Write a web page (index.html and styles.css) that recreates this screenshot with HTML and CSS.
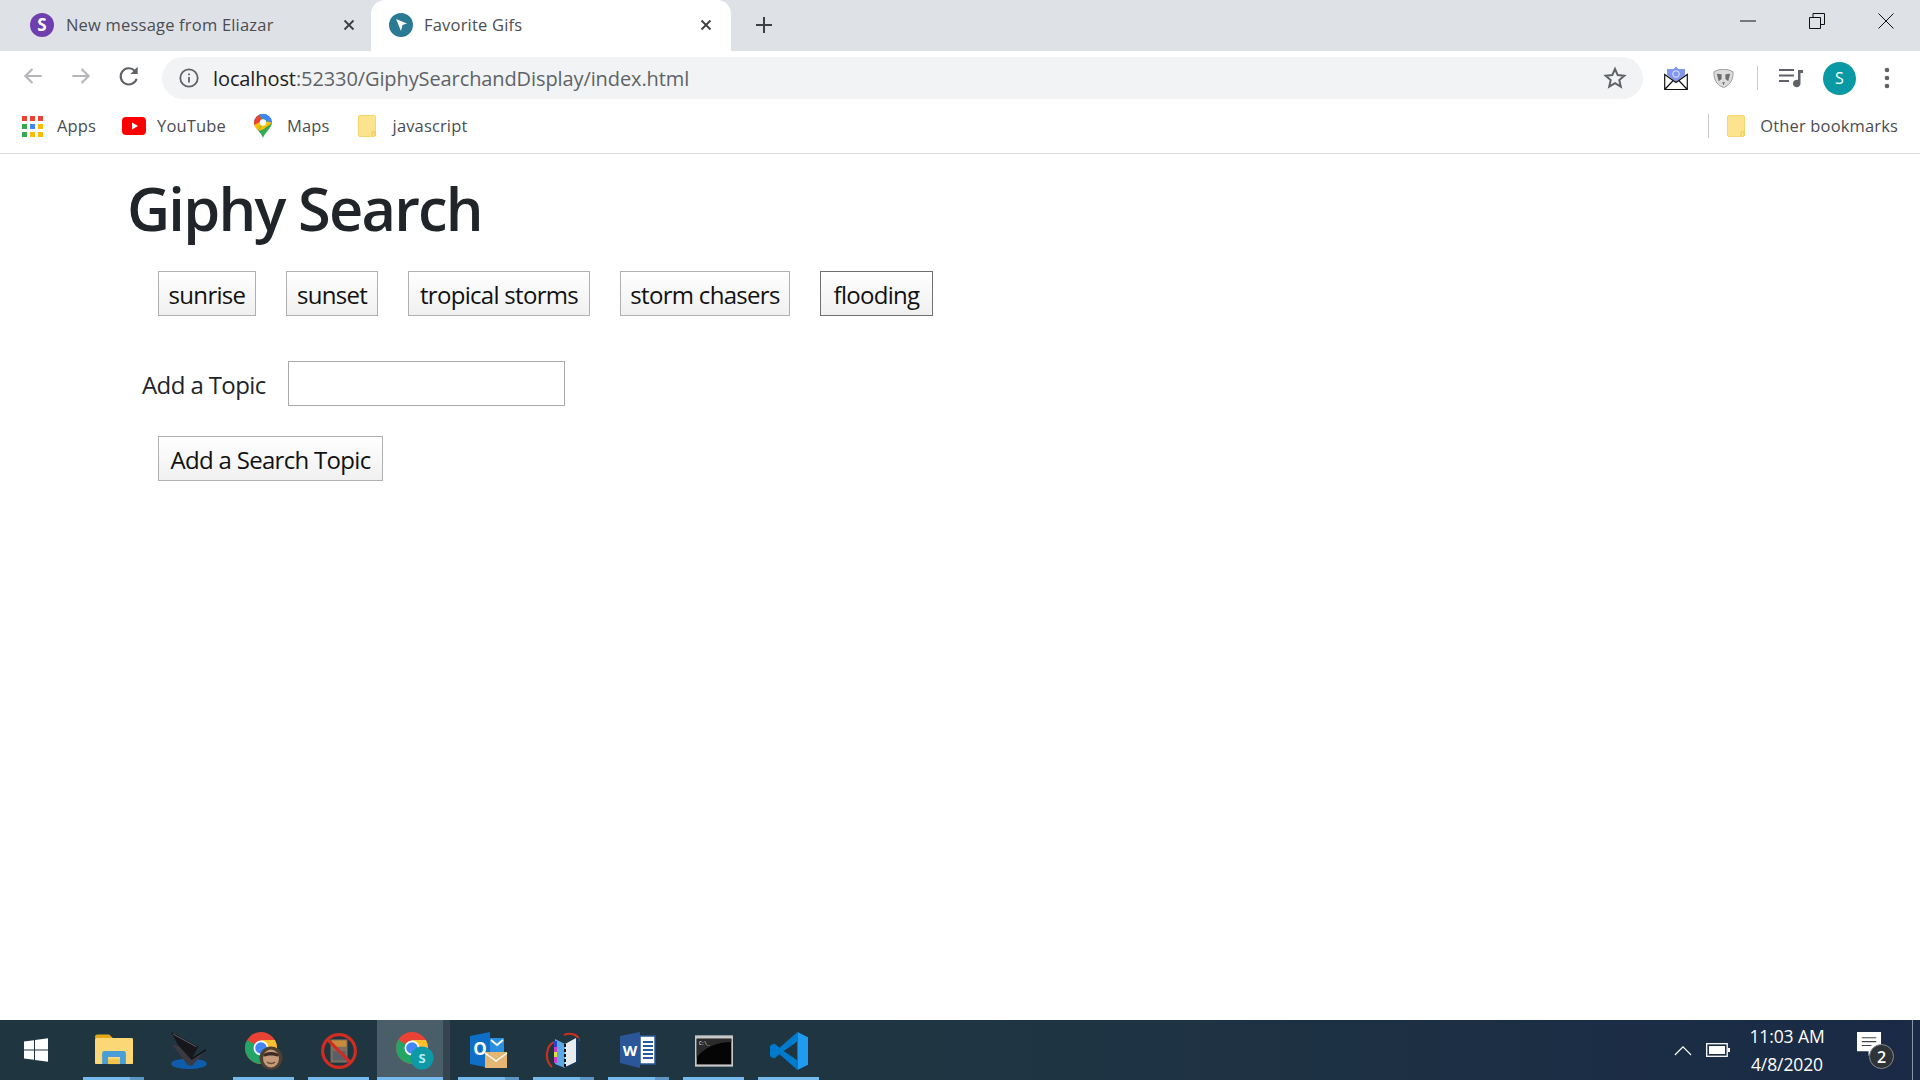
FILE: index.html
```html
<!DOCTYPE html>
<html lang="en">
<head>
<meta charset="utf-8">
<title>Favorite Gifs</title>
<link rel="stylesheet" href="styles.css">
</head>
<body>
<svg class="sprite" viewBox="0 0 38 38" aria-hidden="true"><defs>
  <g id="chromeIcon"><circle cx="16" cy="16" r="16" fill="#ea4335"/><path d="M16 16L2.200 8A16 16 0 0 0 16 32l8-3z" fill="#22a565"/><path d="M16 16h16a16 16 0 0 1-8 13.900z" fill="#fbc02d"/><path d="M16 8h13.900A16 16 0 0 1 32 16v8H20z" fill="#fbc02d"/><circle cx="16" cy="16" r="7.500" fill="#fff"/><circle cx="16" cy="16" r="5.800" fill="#4285f4"/></g>
  <g id="fold"><rect x=".5" y=".5" width="17" height="21" rx="1.500" fill="#fee38f" stroke="#f6d56c"/><path d="M14 21v-3a1.500 1.500 0 0 1 3 0v3" fill="none" stroke="#eec84f"/></g>
  <clipPath id="pin"><path d="M9 24C7.500 18.500 0 14 0 8.500a9 8.500 0 0 1 18 0C18 14 10.500 18.500 9 24z"/></clipPath>
</defs></svg>
<div class="chrome">
  <div class="titlebar">
    <div class="tab">
      <svg class="favicon" viewBox="0 0 24 24"><circle cx="12" cy="12" r="12" fill="#6f3fb0"/><text x="12" y="17.500" text-anchor="middle" class="fav-s">S</text></svg>
      <span class="tab-title">New message from Eliazar</span>
      <svg class="tab-x" viewBox="0 0 12 12"><path d="M1.500 1.500l9 9M10.500 1.500l-9 9"/></svg>
    </div>
    <div class="tab tab-active">
      <svg class="favicon" viewBox="0 0 24 24"><circle cx="12" cy="12" r="12" fill="#2a7a94"/><path d="M7 6l11 4.500-4.500 1.600L12 18z" fill="#fff"/></svg>
      <span class="tab-title">Favorite Gifs</span>
      <svg class="tab-x" viewBox="0 0 12 12"><path d="M1.500 1.500l9 9M10.500 1.500l-9 9"/></svg>
    </div>
    <svg class="newtab" viewBox="0 0 18 18"><path d="M9 1v16M1 9h16"/></svg>
    <div class="winctl">
      <svg viewBox="0 0 16 16"><path d="M0 8h16"/></svg>
      <svg viewBox="0 0 16 16"><path d="M.5 4.500h11v11H.5zM4 4.500V.5h11.500v11H11.500"/></svg>
      <svg viewBox="0 0 16 16"><path d="M.5.500l15 15M15.500.500l-15 15"/></svg>
    </div>
  </div>
  <div class="toolbar">
    <svg class="nav nav-dim" viewBox="0 0 24 24"><path d="M20 12H5M11.500 5.500L5 12l6.500 6.500"/></svg>
    <svg class="nav nav-dim" viewBox="0 0 24 24"><path d="M4 12h15M12.500 5.500L19 12l-6.500 6.500"/></svg>
    <svg class="nav nav-reload" viewBox="0 0 24 24"><path d="M19 14.500a7.500 7.500 0 1 1-1.800-7.400"/><path class="fillp" d="M20 3.500v6.700h-6.700z"/></svg>
    <div class="omnibox">
      <svg class="info" viewBox="0 0 20 20"><circle cx="10" cy="10" r="8.700"/><path d="M10 9v5.500M10 5.400v1.800"/></svg>
      <span class="url"><span class="url-host">localhost</span>:52330/GiphySearchandDisplay/index.html</span>
      <svg class="star" viewBox="0 0 24 24"><path d="M12 3l2.700 6.100 6.600.6-5 4.400 1.500 6.500L12 17.200l-5.800 3.400 1.500-6.500-5-4.400 6.600-.6z"/></svg>
    </div>
    <svg class="ext ext-mail" viewBox="0 0 24 24"><path d="M12 .5l2.500 2.500H21v6l-9 7-9-7V3h6.500z" fill="#8296ee"/><circle cx="12" cy="8" r="3.300" fill="none" stroke="#dfe6ff" stroke-width="1"/><path d="M.7 8.500l11.300 8 11.300-8v15H.7zM.7 23.500l8.500-9M23.300 23.500l-8.500-9" fill="none" stroke="#111" stroke-width="1.200"/></svg>
    <svg class="ext ext-shield" viewBox="0 0 22 20"><path d="M1 3c5-3.500 15-3.500 20 0 .5 7-2 13.500-10 16.500C3 16.500.5 10 1 3z" fill="#dcdcdc"/><path d="M4 5l5 .5v5L6 13zM18 5l-5 .5v5l3 2.500zM9.500 14h3l-1.500 3z" fill="#6d6d6d"/><path d="M1 3c5-3.500 15-3.500 20 0 .5 7-2 13.500-10 16.500C3 16.500.5 10 1 3z" fill="none" stroke="#999"/></svg>
    <span class="tool-sep"></span>
    <svg class="ext ext-music" viewBox="0 0 24 20"><path d="M0 2h15M0 7.500h15M0 13h10" stroke="#5f6368" stroke-width="2" fill="none"/><path d="M19 2h5v3h-2.500v10.500a3.800 3.800 0 1 1-2.500-3.500z" fill="#5f6368"/></svg>
    <div class="avatar">S</div>
    <svg class="kebab" viewBox="0 0 6 24"><circle cx="3" cy="4" r="2.300"/><circle cx="3" cy="12" r="2.300"/><circle cx="3" cy="20" r="2.300"/></svg>
  </div>
  <div class="bookmarks">
    <div class="bm bm-apps">
      <svg class="bm-icon" viewBox="0 0 21 21">
        <rect x="0" y="0" width="5" height="5" fill="#ea4335"/><rect x="8" y="0" width="5" height="5" fill="#ea4335"/><rect x="16" y="0" width="5" height="5" fill="#ea4335"/>
        <rect x="0" y="8" width="5" height="5" fill="#34a853"/><rect x="8" y="8" width="5" height="5" fill="#4285f4"/><rect x="16" y="8" width="5" height="5" fill="#fbbc05"/>
        <rect x="0" y="16" width="5" height="5" fill="#34a853"/><rect x="8" y="16" width="5" height="5" fill="#fbbc05"/><rect x="16" y="16" width="5" height="5" fill="#fbbc05"/>
      </svg>
      <span>Apps</span>
    </div>
    <div class="bm bm-yt">
      <svg class="bm-icon" viewBox="0 0 24 18"><rect width="24" height="18" rx="4" fill="#f00"/><path d="M10 5.500l6 3.500-6 3.500z" fill="#fff"/></svg>
      <span>YouTube</span>
    </div>
    <div class="bm bm-maps">
      <svg class="bm-icon" viewBox="0 0 18 24"><g clip-path="url(#pin)"><rect width="18" height="24" fill="#34a853"/><path d="M0 8h9l-5 8.500L0 14z" fill="#fbbc05"/><path d="M9 9l9-3v3l-9 6.500-5 1.500z" fill="#fbbc05"/><path d="M0 0h5l3 7-8 4z" fill="#ea4335"/><path d="M3 0h15v9L12 6.500z" fill="#4285f4"/></g><circle cx="9" cy="8.500" r="3.200" fill="#fff"/></svg>
      <span>Maps</span>
    </div>
    <div class="bm bm-folder">
      <svg class="bm-icon" viewBox="0 0 18 22"><use href="#fold"/></svg>
      <span>javascript</span>
    </div>
    <div class="bm-right bm-folder">
      <span class="bm-sep"></span>
      <svg class="bm-icon" viewBox="0 0 18 22"><use href="#fold"/></svg>
      <span>Other bookmarks</span>
    </div>
  </div>
</div>

<main class="page">
  <h1 class="heading">Giphy Search</h1>
  <div class="topic-row">
    <button class="btn">sunrise</button>
    <button class="btn">sunset</button>
    <button class="btn">tropical storms</button>
    <button class="btn">storm chasers</button>
    <button class="btn btn-hover">flooding</button>
  </div>
  <form class="topic-form">
    <div class="field">
      <label class="field-label" for="topic">Add a Topic</label>
      <input class="field-input" id="topic" type="text">
    </div>
    <button class="btn btn-add" type="button">Add a Search Topic</button>
  </form>
</main>

<footer class="taskbar">
  <svg class="start" viewBox="0 0 24 24"><path d="M0 3.600l10-1.400v9.300H0zM11 2.100L24 .2v11.300H11zM0 12.500h10v9.300L0 20.400zM11 12.500h13v11.300l-13-1.900z" fill="#fff"/></svg>
  <div class="tb-item tb-split">
    <svg viewBox="0 0 32 28"><path d="M0 2a2 2 0 0 1 2-2h10l3 3H0z" fill="#e6a817"/><rect y="3" width="32" height="22" rx="1" fill="#fbd775"/><path d="M6 25v-9a2 2 0 0 1 2-2h16a2 2 0 0 1 2 2v9h-5v-6H11v6z" fill="#4a9ed8"/><rect x="11" y="21" width="10" height="4" fill="#f0c34a"/></svg>
  </div>
  <div class="tb-item tb-none">
    <svg viewBox="0 0 36 36"><ellipse cx="18" cy="30" rx="17" ry="5" fill="#0f5cab"/><path d="M1 0l26 14-7 12L8 13z" fill="#17171b"/><path d="M3 2l22 12" stroke="#6a6a72" stroke-width=".8"/><path d="M2 12l6 1 12 13 14-9-13 15-4-.5z" fill="#3a3a40"/><path d="M20 26l14-9" stroke="#111" stroke-width="1.500"/></svg>
  </div>
  <div class="tb-item">
    <svg viewBox="0 0 38 38"><use href="#chromeIcon"/><circle cx="26" cy="26" r="11.500" fill="#4f4033"/><ellipse cx="26" cy="26.500" rx="8" ry="9" fill="#c49a78"/><path d="M18 23c3-4 13-4 16 0l-1.500 1.500c-3-1.500-10-1.500-13 0z" fill="#3a2c24"/><path d="M22 30c2 2 6 2 8 0" stroke="#6e4a3a" stroke-width="1.500" fill="none"/></svg>
  </div>
  <div class="tb-item tb-tight">
    <svg viewBox="0 0 36 36"><rect x="10" y="7" width="16" height="22" fill="#7d6f5e"/><rect x="11" y="8" width="14" height="6" fill="#c98a3a"/><path d="M12 18h12v9H12z" fill="#59606a"/><circle cx="18" cy="18" r="15.500" fill="none" stroke="#cf2c22" stroke-width="3"/><path d="M7 7l22 22" stroke="#cf2c22" stroke-width="3"/></svg>
  </div>
  <div class="tb-item tb-active">
    <svg viewBox="0 0 38 38"><use href="#chromeIcon"/><circle cx="26" cy="26" r="11.500" fill="#0e99a6"/><text x="26" y="31" text-anchor="middle" class="tb-s">S</text></svg>
  </div>
  <span class="tb-gap"></span>
  <div class="tb-item tb-split">
    <svg viewBox="0 0 38 38"><path d="M20 0L0 4v28l20 4z" fill="#0f6fc6"/><rect x="20" y="6" width="14" height="14" fill="#2b8fe0"/><path d="M21 8l6 5 6-5" stroke="#fff" stroke-width="1.800" fill="none"/><text x="10" y="23" text-anchor="middle" class="tb-o">O</text><rect x="15" y="20" width="22" height="16" fill="#e5b672"/><path d="M15 21l11 8 11-8" stroke="#fff" stroke-width="1.500" fill="none"/></svg>
  </div>
  <div class="tb-item tb-split">
    <svg viewBox="0 0 38 38"><path d="M7 35C-1 28 1 14 9 10M19 3c7-3 15 0 15 6" stroke="#c4321f" stroke-width="2.200" fill="none"/><path d="M10 7l10 5v24l-10-4z" fill="#5aa9e6"/><path d="M20 12l11-6v24l-11 6z" fill="#e6ecf0"/><path d="M31 6h3v24l-14 7v-2l11-5z" fill="#1b3a5a"/><path d="M9 9h3v6H9z" fill="#2a46d0"/><path d="M9 15h3v5H9z" fill="#d23bc8"/><path d="M9 20h3v5H9z" fill="#dfe03c"/><path d="M9 25h3v6H9z" fill="#d23bc8"/><path d="M20 12v24" stroke="#111" stroke-width="2" stroke-dasharray="3 2"/></svg>
  </div>
  <div class="tb-item tb-split">
    <svg viewBox="0 0 38 38"><path d="M20 0L0 4v27l20 5z" fill="#2b579a"/><rect x="20" y="4" width="15" height="28" fill="#fff" stroke="#2b579a" stroke-width="1.500"/><path d="M23 10h10M23 14h10M23 18h10M23 22h10M23 26h10" stroke="#2b579a" stroke-width="1.800"/><text x="10" y="24" text-anchor="middle" class="tb-w">W</text></svg>
  </div>
  <div class="tb-item">
    <svg viewBox="0 0 34 28"><rect width="34" height="28" fill="#c8c8c8"/><rect x="1.500" y="3" width="31" height="23" fill="#050505"/><path d="M1.500 3h31v3C20 6 8 11 1.500 20z" fill="#2b2b2b"/><text x="3.500" y="9" class="tb-c">C:\_</text></svg>
  </div>
  <div class="tb-item">
    <svg viewBox="0 0 36 36"><path d="M26 0l10 5v26l-10 5z" fill="#1f9cf0"/><path d="M26 0v9L13 18 26 27v9L9 21l-5 4-4-2v-10l4-2 5 4z" fill="#007acc"/></svg>
  </div>
  <div class="tray">
    <svg class="tray-up" viewBox="0 0 20 12"><path d="M1 11l9-9 9 9"/></svg>
    <svg class="tray-bat" viewBox="0 0 24 14"><rect x=".7" y=".7" width="20.500" height="12.600" fill="none" stroke="#fff" stroke-width="1.300"/><rect x="3" y="3" width="16" height="8" fill="#fff"/><rect x="22" y="5" width="2" height="4" fill="#fff"/></svg>
    <div class="clock"><span>11:03 AM</span><span>4/8/2020</span></div>
    <div class="notif">
      <svg viewBox="0 0 26 26"><path d="M0 0h25v20h-9l-4 5v-5H0z" fill="#fff"/><path d="M5 6h15M5 10h15M5 14h10" stroke="#444" stroke-width="1.200"/></svg>
      <span class="notif-badge">2</span>
    </div>
  </div>
  <span class="show-desktop"></span>
</footer>
</body>
</html>
```
FILE: styles.css
```css
* { box-sizing: border-box; }
html, body { height: 100%; }
body {
  margin: 0;
  height: 1080px;
  overflow: hidden;
  display: flex;
  flex-direction: column;
  background: #fff;
  font-family: "Open Sans", "Noto Sans", sans-serif;
  color: #212529;
}
.sprite { width: 0; height: 0; position: absolute; }

/* browser chrome */
.chrome { height: 154px; border-bottom: 1px solid #dcdcdc; flex: none; }
.titlebar { height: 51px; background: #dee1e6; display: flex; align-items: center; }
.tab {
  width: 371px; height: 51px; padding: 0 16px 0 30px;
  display: flex; align-items: center; color: #4a4d52;
  font-size: 16.500px; letter-spacing: .2px;
}
.tab-active {
  width: 360px; background: #fff; border-radius: 14px 14px 0 0; padding-left: 18px; padding-right: 19px;
}
.favicon { width: 24px; height: 24px; flex: none; margin-top: -2px; }
.fav-s { font: 700 17px "Open Sans", sans-serif; fill: #fff; }
.tab-title { flex: 1; margin-left: 12px; white-space: nowrap; margin-top: -3px; }
.tab-active .tab-title { margin-left: 11px; }
.tab-x { width: 12px; height: 12px; fill: none; stroke: #3c4043; stroke-width: 1.800; flex: none; margin-top: -1px; }
.newtab { width: 18px; height: 18px; margin-left: 24px; fill: none; stroke: #3c4043; stroke-width: 2; margin-top: -1px; }
.winctl { margin-left: auto; display: flex; gap: 53px; padding-right: 26px; margin-top: -9px; }
.winctl svg { width: 16px; height: 16px; fill: none; stroke: #111; stroke-width: 1; }

.toolbar { height: 48px; display: flex; align-items: center; padding: 0 25px 0 20px; }
.nav { width: 26px; height: 26px; fill: none; stroke-width: 2; flex: none; margin-right: 22px; margin-top: 1px; }
.nav-dim { stroke: #b4b6b9; }
.nav-reload { stroke: #5f6368; margin-right: 20px; }
.fillp { fill: #5f6368; stroke: none; }
.omnibox {
  width: 1481px; height: 42px; border-radius: 21px; background: #f1f3f4;
  display: flex; align-items: center; padding: 0 16px 0 17px; margin-top: 6px; flex: none;
}
.info { width: 20px; height: 20px; fill: none; stroke: #5f6368; stroke-width: 1.800; flex: none; }
.url { flex: 1; margin-left: 14px; font-size: 20px; color: #5f6368; letter-spacing: -.1px; white-space: nowrap; }
.url-host { color: #202124; }
.star { width: 24px; height: 24px; fill: none; stroke: #5f6368; stroke-width: 2; flex: none; }
.ext { flex: none; margin-top: 6px; }
.ext-mail { width: 24px; height: 24px; margin-left: 21px; }
.ext-shield { width: 21px; height: 19px; margin-left: 25px; }
.tool-sep { width: 1px; height: 24px; background: #ccc; margin: 6px 0 0 23px; flex: none; }
.ext-music { width: 24px; height: 20px; margin-left: 21px; }
.avatar {
  width: 33px; height: 33px; border-radius: 50%; background: #0a9aa5; color: #fff; margin: 6px 0 0 20px;
  display: flex; align-items: center; justify-content: center; font-size: 16px; flex: none;
}
.kebab { width: 6px; height: 24px; fill: #5f6368; margin: 6px 0 0 28px; flex: none; }

.bookmarks { height: 54px; display: flex; align-items: center; font-size: 16.500px; letter-spacing: .15px; color: #4a4d52; padding: 0 22px; }
.bookmarks span:not(.bm-sep) { margin-top: -2px; }
.bm { display: flex; align-items: center; margin-right: 28px; }
.bm-icon { flex: none; }
.bm-apps { margin-right: 26px; }
.bm-apps .bm-icon { width: 21px; height: 21px; margin-right: 14px; }
.bm-yt .bm-icon { width: 24px; height: 18px; margin-right: 11px; }
.bm-maps .bm-icon { width: 18px; height: 24px; margin-right: 15px; }
.bm-folder .bm-icon { width: 18px; height: 22px; margin-right: 17px; }
.bm-right { margin-left: auto; display: flex; align-items: center; }
.bm-right .bm-icon { margin-right: 15px; }
.bm-sep { width: 1px; height: 24px; background: #ccc; margin-right: 18px; }

/* page */
.page { flex: 1; padding: 0 0 0 128px; }
.heading { margin: 18px 0 0 -1px; font-size: 59.500px; line-height: 72px; font-weight: 600; letter-spacing: -1.800px; }
.topic-row { display: grid; grid-template-columns: 98px 92px 182px 170px 113px; gap: 30px; margin: 27px 0 0 30px; }
.btn {
  height: 45px; padding: 2px 0 0; font: 24px "Open Sans", sans-serif; letter-spacing: -.7px; color: #111;
  border: 1px solid #b0b0b0; border-radius: 0;
  background: linear-gradient(#fff, #f0f0f0); white-space: nowrap;
}
.btn-hover { border-color: #707070; }
.btn-add { display: block; width: 225px; margin: 30px 0 0 16px; }
.topic-form { margin: 45px 0 0 14px; }
.field { display: flex; align-items: center; }
.field-label { font-size: 24px; letter-spacing: -.6px; width: 146px; padding-top: 2px; }
.field-input { width: 277px; height: 45px; border: 1px solid #aaa; background: #fff; padding: 0; }

/* taskbar */
.taskbar {
  flex: none; height: 60px; display: flex; align-items: center; position: relative;
  background: linear-gradient(90deg, #1f3540 0%, #1f3642 45%, #1a2a46 100%);
  color: #fff;
}
.start { width: 24px; height: 24px; margin: 0 35px 0 24px; flex: none; }
.tb-item {
  width: 61px; height: 60px; padding-top: 4px; flex: none; margin-right: 14px; display: flex; align-items: center; justify-content: center; position: relative;
  border-bottom: 3px solid #76b9ed;
}
.tb-item svg { width: 38px; height: 38px; }
.tb-none { border-bottom-color: transparent; }
.tb-split::after { content: ""; position: absolute; right: 0; bottom: -3px; width: 14px; height: 3px; background: #5d95c4; }
.tb-tight { margin-right: 8px; }
.tb-active { width: 66px; margin-right: 0; padding-left: 10px; background: #4a5e69; }
.tb-gap { width: 15px; height: 60px; flex: none; background: linear-gradient(90deg, #35444f 0 7px, transparent 7px); }
.tb-s { font: 700 13px "Open Sans", sans-serif; fill: #b8ebef; }
.tb-o { font: 700 17px "Open Sans", sans-serif; fill: #fff; }
.tb-w { font: 700 15px "Open Sans", sans-serif; fill: #fff; }
.tb-c { font: 4px "Liberation Mono", monospace; fill: #eee; }
.tray { margin-left: auto; display: flex; align-items: center; padding-right: 19px; }
.tray-up { width: 18px; height: 11px; fill: none; stroke: #fff; stroke-width: 1.300; margin-right: 14px; }
.tray-bat { width: 24px; height: 14px; margin-right: 17px; }
.clock { display: flex; flex-direction: column; align-items: center; width: 80px; font-size: 17.500px; line-height: 28px; letter-spacing: -.1px; }
.notif { position: relative; width: 36px; height: 36px; margin-left: 30px; }
.notif svg { width: 25px; height: 25px; display: block; }
.notif-badge {
  position: absolute; left: 12px; top: 12px; width: 25px; height: 25px; border-radius: 50%;
  background: #2f3336; border: 1px solid #888; display: flex; align-items: center; justify-content: center; font-size: 16px; font-weight: 600;
}
.show-desktop { width: 8px; height: 60px; border-left: 1px solid #8a96a6; flex: none; }
```
